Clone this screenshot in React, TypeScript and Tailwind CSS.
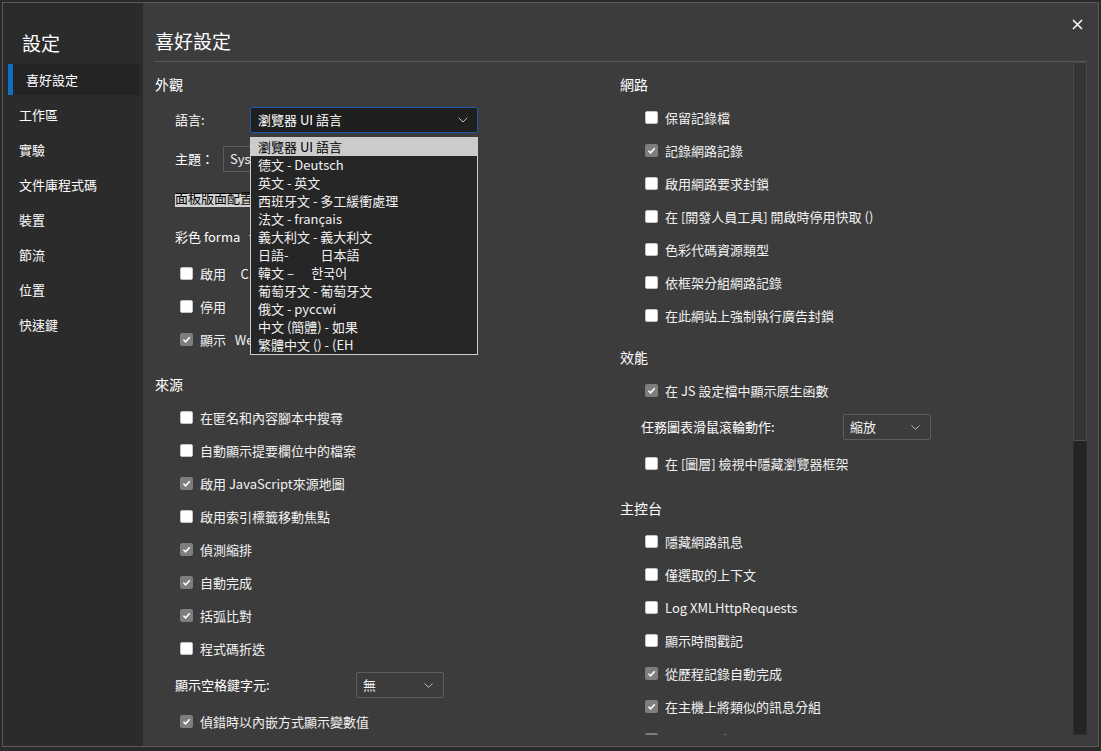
import React from "react";
import { ChevronDown } from "lucide-react";
import clsx from "clsx";

const sidebarItems = ["喜好設定", "工作區", "實驗", "文件庫程式碼", "裝置", "節流", "位置", "快速鍵"];

const languages = [
    "瀏覽器 UI 語言",
    "德文 - Deutsch",
    "英文 - 英文",
    "西班牙文 - 多工緩衝處理",
    "法文 - français",
    "義大利文 - 義大利文",
    "日語-           日本語",
    "韓文 –      한국어",
    "葡萄牙文 - 葡萄牙文",
    "俄文 - pyccwi",
    "中文 (簡體) - 如果",
    "繁體中文 () - (EH",
];

const CheckBox: React.FC<{ checked?: boolean }> = ({ checked }) =>
    checked ? (
        <span className="flex h-[13px] w-[13px] shrink-0 items-center justify-center rounded-[2px] bg-[#7e7e7e]">
            <svg width="9" height="9" viewBox="0 0 10 10">
                <path d="M1.6 5.3 L4 7.6 L8.6 2.4" fill="none" stroke="#fff" strokeWidth="1.7" />
            </svg>
        </span>
    ) : (
        <span className="block h-[13px] w-[13px] shrink-0 rounded-[2px] border border-[#c4c4c4] bg-white" />
    );

const CheckRow: React.FC<{ label: string; checked?: boolean }> = ({ label, checked }) => (
    <div className="flex h-[33px] items-center gap-[7px] pl-[25px] text-[13px] whitespace-pre text-[#f2f2f2]">
        <CheckBox checked={checked} />
        <span>{label}</span>
    </div>
);

const Heading: React.FC<{ children: React.ReactNode; className?: string }> = ({ children, className }) => (
    <div className={clsx("flex h-[34px] items-center text-[14px] text-white", className)}>{children}</div>
);

const SelectBox: React.FC<{ value: string; className?: string }> = ({ value, className }) => (
    <div
        className={clsx(
            "flex h-[26px] items-center justify-between rounded-[2px] border border-[#5e5e5e] pl-[6px] pr-[7px] text-[13px] text-[#f2f2f2]",
            className
        )}
    >
        <span className="truncate">{value}</span>
        <ChevronDown size={15} strokeWidth={1.4} className="shrink-0 text-[#c8c8c8]" />
    </div>
);

const App: React.FC = () => {
    return (
        <div className="h-[751px] w-[1101px] overflow-hidden bg-[#2a2a2a] px-[2px] pt-[2px] pb-[4px] font-['Noto_Sans_CJK_TC','Noto_Sans',sans-serif] text-white">
            <div className="flex h-full border border-[#5a5a5a]">
                {/* sidebar */}
                <div className="w-[140px] shrink-0 bg-[#2b2b2b] pt-[26px]">
                    <div className="pl-[19px] text-[19px] leading-[28px]">設定</div>
                    <div className="mt-[5px]">
                        {sidebarItems.map((item, i) => (
                            <div key={item} className="flex h-[35px] items-center">
                                {i === 0 ? (
                                    <div className="ml-[5px] flex h-[31px] w-[132px] items-center bg-[#242424]">
                                        <span className="h-full w-[5px] bg-[#0e6fc3]" />
                                        <span className="pl-[13px] text-[13px]">{item}</span>
                                    </div>
                                ) : (
                                    <span className="pl-[16px] text-[13px]">{item}</span>
                                )}
                            </div>
                        ))}
                    </div>
                </div>

                {/* main */}
                <div className="flex flex-1 flex-col bg-[#3c3c3c] pl-[11px] pr-[11px]">
                    <div className="flex items-start justify-between">
                        <div className="pl-[1px] pt-[24px] text-[19px] leading-[28px]">喜好設定</div>
                        <button className="mt-[15px] mr-[3px] p-[1px]">
                            <svg width="11" height="11" viewBox="0 0 11 11">
                                <path d="M1 1 L10 10 M10 1 L1 10" stroke="#fff" strokeWidth="1.5" />
                            </svg>
                        </button>
                    </div>

                    <div className="mt-[6px] flex h-[674px] overflow-hidden border-t border-[#565656]">
                        <div className="flex flex-1">
                            {/* left column */}
                            <div className="w-[466px] shrink-0 pl-[1px] pt-[5px]">
                                <Heading>外觀</Heading>
                                <div className="flex h-[38px] items-center pl-[20px] text-[13px]">
                                    <span className="w-[75px]">語言:</span>
                                    <div className="relative">
                                        <div className="flex h-[26px] w-[228px] items-center justify-between rounded-[2px] border border-[#1d5ca6] bg-[#1f1f1f] pl-[7px] pr-[6px]">
                                            <span>瀏覽器 UI 語言</span>
                                            <ChevronDown size={16} strokeWidth={1.4} className="text-[#d0d0d0]" />
                                        </div>
                                        <div className="absolute left-0 top-[30px] z-10 w-[228px] border border-[#cdcdcd] bg-[#262626]">
                                            {languages.map((lang, i) => (
                                                <div
                                                    key={lang}
                                                    className={clsx(
                                                        "flex h-[18px] items-center pl-[7px] text-[13px] whitespace-pre",
                                                        i === 0 ? "bg-[#cccccc] text-black" : "text-[#f2f2f2]"
                                                    )}
                                                >
                                                    {lang}
                                                </div>
                                            ))}
                                        </div>
                                    </div>
                                </div>
                                <div className="flex h-[40px] items-center pl-[20px] text-[13px]">
                                    <span className="w-[48px]">主題：</span>
                                    <div className="flex h-[26px] w-[28px] items-center overflow-hidden rounded-l-[2px] border-y border-l border-[#5e5e5e] pl-[6px] whitespace-nowrap text-[#f2f2f2]">
                                        Syst
                                    </div>
                                </div>
                                <div className="flex h-[38px] items-center pl-[20px] text-[13px]">
                                    <span className="inline-block bg-[linear-gradient(to_bottom,#3c3c3c_30%,#d2d2d2_30%)] leading-[18px] text-black">
                                        面板版面配置:
                                    </span>
                                </div>
                                <div className="flex h-[40px] items-center pl-[20px] text-[13px] whitespace-pre">
                                    彩色 forma   t
                                </div>
                                <CheckRow label="啟用     C" />
                                <CheckRow label="停用        p" />
                                <CheckRow label="顯示   We" checked />

                                <Heading className="mt-[11px]">來源</Heading>
                                <CheckRow label="在匿名和內容腳本中搜尋" />
                                <CheckRow label="自動顯示提要欄位中的檔案" />
                                <CheckRow label="啟用 JavaScript來源地圖" checked />
                                <CheckRow label="啟用索引標籤移動焦點" />
                                <CheckRow label="偵測縮排" checked />
                                <CheckRow label="自動完成" checked />
                                <CheckRow label="括弧比對" checked />
                                <CheckRow label="程式碼折迭" />
                                <div className="flex h-[40px] items-center pl-[20px] text-[13px]">
                                    <span className="w-[181px]">顯示空格鍵字元:</span>
                                    <SelectBox value="無" className="w-[88px]" />
                                </div>
                                <CheckRow label="偵錯時以內嵌方式顯示變數值" checked />
                            </div>

                            {/* right column */}
                            <div className="flex-1 pt-[5px]">
                                <Heading>網路</Heading>
                                <CheckRow label="保留記錄檔" />
                                <CheckRow label="記錄網路記錄" checked />
                                <CheckRow label="啟用網路要求封鎖" />
                                <CheckRow label="在 [開發人員工具] 開啟時停用快取 ()" />
                                <CheckRow label="色彩代碼資源類型" />
                                <CheckRow label="依框架分組網路記錄" />
                                <CheckRow label="在此網站上強制執行廣告封鎖" />

                                <Heading className="mt-[8px]">效能</Heading>
                                <CheckRow label="在 JS 設定檔中顯示原生函數" checked />
                                <div className="flex h-[40px] items-center pl-[21px] text-[13px]">
                                    <span className="w-[202px]">任務圖表滑鼠滾輪動作:</span>
                                    <SelectBox value="縮放" className="w-[88px]" />
                                </div>
                                <CheckRow label="在 [圖層] 檢視中隱藏瀏覽器框架" />

                                <Heading className="mt-[11px]">主控台</Heading>
                                <CheckRow label="隱藏網路訊息" />
                                <CheckRow label="僅選取的上下文" />
                                <CheckRow label="Log XMLHttpRequests" />
                                <CheckRow label="顯示時間戳記" />
                                <CheckRow label="從歷程記錄自動完成" checked />
                                <CheckRow label="在主機上將類似的訊息分組" checked />
                                <CheckRow label="Eager evaluation" checked />
                            </div>
                        </div>

                        {/* scrollbar */}
                        <div className="flex w-[14px] shrink-0 flex-col">
                            <div className="h-[379px] rounded-[2px] border border-[#4b4b4b] bg-[#353535]" />
                            <div className="flex-1 border-x border-b border-[#2f2f2f] bg-[#242424]" />
                        </div>
                    </div>
                </div>
            </div>
        </div>
    );
};

export default App;
